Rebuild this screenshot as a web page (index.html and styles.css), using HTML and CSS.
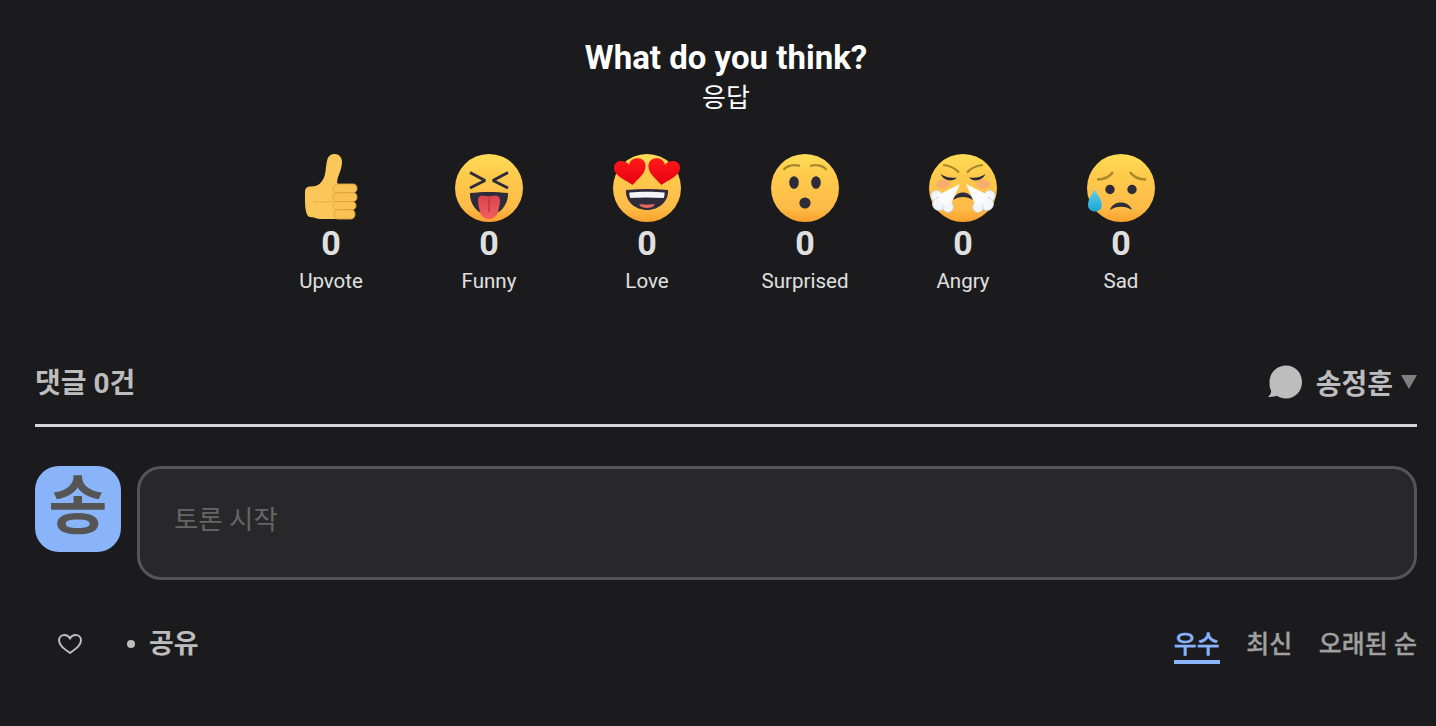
FILE: index.html
```html
<!DOCTYPE html>
<html lang="ko">
<head>
    <meta charset="UTF-8">
    <meta name="viewport" content="width=device-width, initial-scale=1.0">
    <title>What do you think?</title>
    <link rel="stylesheet" href="styles.css">
</head>
<body>
    <svg class="defs" width="0" height="0" aria-hidden="true">
        <defs>
            <linearGradient id="face" x1="0" y1="0" x2="0" y2="1">
                <stop offset="0" stop-color="#ffdd55"/>
                <stop offset="0.3" stop-color="#ffcb4c"/>
                <stop offset="0.8" stop-color="#fdbb47"/>
                <stop offset="1" stop-color="#f9a12c"/>
            </linearGradient>
            <linearGradient id="tongue" x1="0" y1="0" x2="0" y2="1">
                <stop offset="0" stop-color="#d9434e"/>
                <stop offset="1" stop-color="#f2605f"/>
            </linearGradient>
            <linearGradient id="heart" x1="0" y1="0" x2="0" y2="1">
                <stop offset="0" stop-color="#ff1a1a"/>
                <stop offset="1" stop-color="#e60012"/>
            </linearGradient>
            <linearGradient id="drop" x1="0" y1="0" x2="0" y2="1">
                <stop offset="0" stop-color="#63cfe6"/>
                <stop offset="1" stop-color="#17a6d8"/>
            </linearGradient>
        </defs>
    </svg>

    <main class="page">
        <!-- Reacciones -->
        <section class="reactions-box">
            <h2 class="title">What do you think?</h2>
            <div class="subtitle">응답</div>
            <div class="reactions">
                <div class="reaction">
                    <svg class="emoji" viewBox="0 0 68 68">
                        <path d="M8 38c0-4 2-5.500 6-5.500 4 0 7-1 9-3 3-3 5-7 5.500-12 .4-4 1-9 2-12.500C31.300 2 34 0 37.500 0 42 0 45 3.500 45 8c0 6-3 12-4.500 17-.5 2-.5 4 .5 5.500l4 34.500H23c-3 0-5-1.500-8-1.700-2.500-.2-4-.6-5-2.800-1.300-3-2-8-2-13.500z" fill="#fcc75a"/>
                        <path d="M41 30h15c2.600 0 4 1.900 4 4.300 0 2.500-1.400 4.500-4 4.500H40c-2.400 0-4-1.900-4-4.400 0-2.500 2.400-4.400 5-4.400z" fill="#f9c256" stroke="#e0a33c" stroke-width=".9"/>
                        <path d="M40 38.800h16c2.600 0 4 1.900 4 4.300 0 2.500-1.400 4.400-4 4.400H40c-2.400 0-4-1.900-4-4.300 0-2.500 1.600-4.400 4-4.400z" fill="#f9c256" stroke="#e0a33c" stroke-width=".9"/>
                        <path d="M40 47.500h15c2.600 0 4 1.800 4 4.100 0 2.400-1.400 4.200-4 4.200H40c-2.400 0-4-1.800-4-4.100 0-2.400 1.600-4.200 4-4.200z" fill="#f9c256" stroke="#e0a33c" stroke-width=".9"/>
                        <path d="M41 55.800h13c2.600 0 4 1.800 4 4.300 0 2.800-1.400 4.900-4 4.900H41c-2.400 0-4-2-4-4.600 0-2.600 1.600-4.600 4-4.600z" fill="#f9c256" stroke="#e0a33c" stroke-width=".9"/>
                        <path d="M16 47.500c7 .8 13 .6 20-.2" fill="none" stroke="#e0a33c" stroke-width=".8"/>
                    </svg>
                    <div class="count">0</div>
                    <div class="label">Upvote</div>
                </div>
                <div class="reaction">
                    <svg class="emoji" viewBox="0 0 68 68">
                        <circle cx="34" cy="34" r="34" fill="url(#face)"/>
                        <path d="M15 18.500l15 8-15 7.500" fill="none" stroke="#2e2c3a" stroke-width="3" stroke-linejoin="bevel"/>
                        <path d="M53 18.500l-15 8 15 7.500" fill="none" stroke="#2e2c3a" stroke-width="3" stroke-linejoin="bevel"/>
                        <path d="M15 39c12-1.500 26-1.500 38 0 .5 9-5 17-11 20H26c-6-3-11.500-11-11-20z" fill="#2e2c3a"/>
                        <path d="M23 46c0-3 2-4.500 5-4.500 4 1 8 1 12 0 3 0 5 1.500 5 4.500 0 4-1 8-2 12-1 4-4.500 7-9 7s-8-3-9-7c-1-4-2-8-2-12z" fill="url(#tongue)"/>
                        <path d="M34 43v15" stroke="#c63641" stroke-width="1.500"/>
                    </svg>
                    <div class="count">0</div>
                    <div class="label">Funny</div>
                </div>
                <div class="reaction">
                    <svg class="emoji" viewBox="0 0 68 68">
                        <circle cx="34" cy="34" r="34" fill="url(#face)"/>
                        <path d="M19.500 31C15 27 1.500 22.500 1 14.500 .7 9 5 6.500 9 7c3 .3 5.500 1.500 7 4C17 6.500 20 4 25 4.200c5 .3 8 4 7.500 9-.7 7-8 12-13 17.800z" fill="url(#heart)"/>
                        <path d="M48.500 31C53 27 66.500 22.500 67 14.500 67.300 9 63 6.500 59 7c-3 .3-5.500 1.500-7 4C51 6.500 48 4 43 4.200c-5 .3-8 4-7.500 9 .7 7 8 12 13 17.800z" fill="url(#heart)"/>
                        <path d="M13 36c14-1.500 28-1.500 42 0 1 11-9 20-21 20s-22-9-21-20z" fill="#2e2c3a"/>
                        <path d="M16.500 38.500c11-1 24-1 35 0 .3 2-.2 4.500-1 5.500-11-.8-21-.8-33 0-.8-1-1.300-3.500-1-5.500z" fill="#f4f5fa"/>
                        <path d="M26 50.500c3-.8 5.500.2 8 .2s5-1 8-.2c-2 2.700-5 3.500-8 3.500s-6-.8-8-3.500z" fill="#e8695f"/>
                    </svg>
                    <div class="count">0</div>
                    <div class="label">Love</div>
                </div>
                <div class="reaction">
                    <svg class="emoji" viewBox="0 0 68 68">
                        <circle cx="34" cy="34" r="34" fill="url(#face)"/>
                        <path d="M12.500 16c3-4.500 10-6 16.500-4" fill="none" stroke="#a9892e" stroke-width="2.200"/>
                        <path d="M55.500 16c-3-4.500-10-6-16.500-4" fill="none" stroke="#a9892e" stroke-width="2.200"/>
                        <ellipse cx="23" cy="28.500" rx="4.800" ry="6.300" fill="#2e2c3a"/>
                        <ellipse cx="45" cy="28.500" rx="4.800" ry="6.300" fill="#2e2c3a"/>
                        <circle cx="34" cy="49" r="5.600" fill="#2e2c3a"/>
                    </svg>
                    <div class="count">0</div>
                    <div class="label">Surprised</div>
                </div>
                <div class="reaction">
                    <svg class="emoji" viewBox="0 0 68 68">
                        <circle cx="34" cy="34" r="34" fill="url(#face)"/>
                        <ellipse cx="14" cy="30" rx="7" ry="4.500" fill="#f3a27e" opacity=".7"/>
                        <ellipse cx="54" cy="30" rx="7" ry="4.500" fill="#f3a27e" opacity=".7"/>
                        <path d="M14 11c6 .5 12 3 16 7.500" fill="none" stroke="#a9892e" stroke-width="2.200"/>
                        <path d="M54 11c-6 .5-12 3-16 7.500" fill="none" stroke="#a9892e" stroke-width="2.200"/>
                        <path d="M11.500 20c4 3 10 4.500 16.500 3.500-4 4.500-13 4-16.500-3.500z" fill="#2e2c3a"/>
                        <path d="M56.500 20c-4 3-10 4.500-16.500 3.500 4 4.500 13 4 16.500-3.500z" fill="#2e2c3a"/>
                        <path d="M24 46c2.500-10 17.500-10 20 0-6-4-14-4-20 0z" fill="#2e2c3a"/>
                        <g fill="#f4f7fa" stroke="#c9d6dc" stroke-width=".8">
                            <circle cx="7.500" cy="42" r="5.500"/>
                            <circle cx="10" cy="50" r="6.500"/>
                            <circle cx="19" cy="53" r="5.300"/>
                            <circle cx="60.500" cy="42" r="5.500"/>
                            <circle cx="58" cy="50" r="6.500"/>
                            <circle cx="49" cy="53" r="5.300"/>
                        </g>
                        <path d="M31 30L9 41l3 10 10-1zM37 30l22 11-3 10-10-1z" fill="#f9fbfc"/>
                    </svg>
                    <div class="count">0</div>
                    <div class="label">Angry</div>
                </div>
                <div class="reaction">
                    <svg class="emoji" viewBox="0 0 68 68">
                        <circle cx="34" cy="34" r="34" fill="url(#face)"/>
                        <path d="M10 25.500c7 0 13-3 16-7.500" fill="none" stroke="#a9892e" stroke-width="2.400"/>
                        <path d="M59 25.500c-7 0-13-3-16-7.500" fill="none" stroke="#a9892e" stroke-width="2.400"/>
                        <circle cx="23" cy="35.500" r="4.700" fill="#2e2c3a"/>
                        <circle cx="45" cy="35.500" r="4.700" fill="#2e2c3a"/>
                        <path d="M23 56c2.500-10 19-10 22 0-6-4.500-16-4.500-22 0z" fill="#2e2c3a"/>
                        <path d="M7.500 35.500c2 4 7.300 9 7.300 15.500 0 4-3 6.500-6.800 6.500S1 55 1 51c0-6.500 4.500-11.500 6.500-15.500z" fill="url(#drop)"/>
                    </svg>
                    <div class="count">0</div>
                    <div class="label">Sad</div>
                </div>
            </div>
        </section>

        <!-- Comentarios -->
        <section class="comments">
            <div class="comments-head">
                <div class="comments-count">댓글 0건</div>
                <div class="user-menu">
                    <svg class="bubble" viewBox="0 0 34 34">
                        <path d="M18 .5C27 .5 34 7.500 34 17s-7 16.500-16 16.500c-3.500 0-6.500-1-9-2.800-2.500.8-6 1.300-9 1.300 1.800-1.500 3-3.500 3.200-6C1.800 23.500 1.500 20.500 1.500 17 1.500 7.500 9 .5 18 .5z" fill="#bdbdbd"/>
                    </svg>
                    <span class="user-name">송정훈</span>
                    <span class="caret"></span>
                </div>
            </div>

            <div class="compose">
                <div class="avatar">송</div>
                <div class="input">토론 시작</div>
            </div>

            <div class="toolbar">
                <div class="toolbar-left">
                    <svg class="heart" viewBox="0 0 24 20">
                        <path d="M12 19C6.500 15 1 11.500 1 6.300 1 3 3.500 1 6.500 1 8.800 1 10.800 2.200 12 4.300 13.200 2.200 15.200 1 17.500 1 20.500 1 23 3 23 6.300 23 11.500 17.500 15 12 19z" fill="none" stroke="#bdbdbd" stroke-width="2"/>
                    </svg>
                    <span class="dot"></span>
                    <span class="share">공유</span>
                </div>
                <div class="sort">
                    <span class="sort-item active">우수</span>
                    <span class="sort-item">최신</span>
                    <span class="sort-item">오래된 순</span>
                </div>
            </div>
        </section>
    </main>
</body>
</html>
```

FILE: styles.css
```css
body {
    margin: 0;
    height: 726px;
    overflow: hidden;
    background: #1b1b1d;
    color: #fff;
    font-family: Roboto, "Noto Sans CJK KR", sans-serif;
}
.defs {
    display: block;
}
.page {
    padding: 0 19px 0 35px;
}
.reactions-box {
    padding-top: 38px;
    text-align: center;
}
.title {
    margin: 0;
    font-size: 33px;
    line-height: 40px;
    font-weight: 700;
}
.subtitle {
    font-size: 26px;
    line-height: 40px;
}
.reactions {
    display: flex;
    justify-content: center;
    margin-top: 36px;
}
.reaction {
    width: 158px;
    display: flex;
    flex-direction: column;
    align-items: center;
}
.emoji {
    width: 68px;
    height: 68px;
    display: block;
}
.count {
    margin-top: -1px;
    font-size: 34px;
    line-height: 44px;
    font-weight: 700;
    color: #e0e0e0;
}
.label {
    margin-top: 1px;
    font-size: 20.5px;
    line-height: 30px;
    color: #e0e0e0;
}
.comments {
    margin-top: 55px;
}
.comments-head {
    display: flex;
    justify-content: space-between;
    align-items: center;
    height: 76px;
    box-sizing: border-box;
    border-bottom: 3px solid #d5d5dc;
    padding-bottom: 14px;
}
.comments-count {
    font-size: 28px;
    font-weight: 700;
    color: #bdbdbd;
}
.user-menu {
    display: flex;
    align-items: center;
    color: #bdbdbd;
    font-weight: 700;
    font-size: 28px;
}
.bubble {
    width: 34px;
    height: 34px;
    margin-top: 3px;
    margin-right: 14px;
}
.user-name {
    padding-top: 2px;
}
.caret {
    margin-left: 8px;
    margin-top: 2px;
    border-left: 8px solid transparent;
    border-right: 8px solid transparent;
    border-top: 14px solid #808080;
}
.compose {
    display: flex;
    gap: 16px;
    margin-top: 39px;
}
.avatar {
    width: 86px;
    height: 86px;
    flex: none;
    border-radius: 24px;
    background: #89b4fa;
    color: #555;
    font-size: 64px;
    font-weight: 700;
    line-height: 82px;
    text-align: center;
}
.input {
    flex: 1;
    height: 114px;
    box-sizing: border-box;
    border: 3px solid #555;
    border-radius: 24px;
    background: #28282a;
    color: #666;
    font-size: 26.4px;
    line-height: 102px;
    padding-left: 34px;
}
.toolbar {
    display: flex;
    justify-content: space-between;
    align-items: center;
    margin-top: 40px;
    height: 48px;
}
.toolbar-left {
    display: flex;
    align-items: center;
    padding-left: 23px;
}
.heart {
    width: 24px;
    height: 20px;
}
.dot {
    width: 8px;
    height: 8px;
    border-radius: 50%;
    background: #bdbdbd;
    margin-left: 45px;
    margin-right: 14px;
}
.share {
    margin-bottom: 5px;
    font-size: 27px;
    font-weight: 700;
    color: #bdbdbd;
}
.sort {
    display: flex;
    gap: 26.5px;
    align-self: flex-start;
    margin-top: 10px;
}
.sort-item {
    font-size: 25px;
    font-weight: 500;
    -webkit-text-stroke: .3px;
    line-height: 30px;
    color: #a0a0a0;
    border-bottom: 4px solid transparent;
}
.sort-item.active {
    color: #89b4fa;
    border-bottom-color: #89b4fa;
}
```
